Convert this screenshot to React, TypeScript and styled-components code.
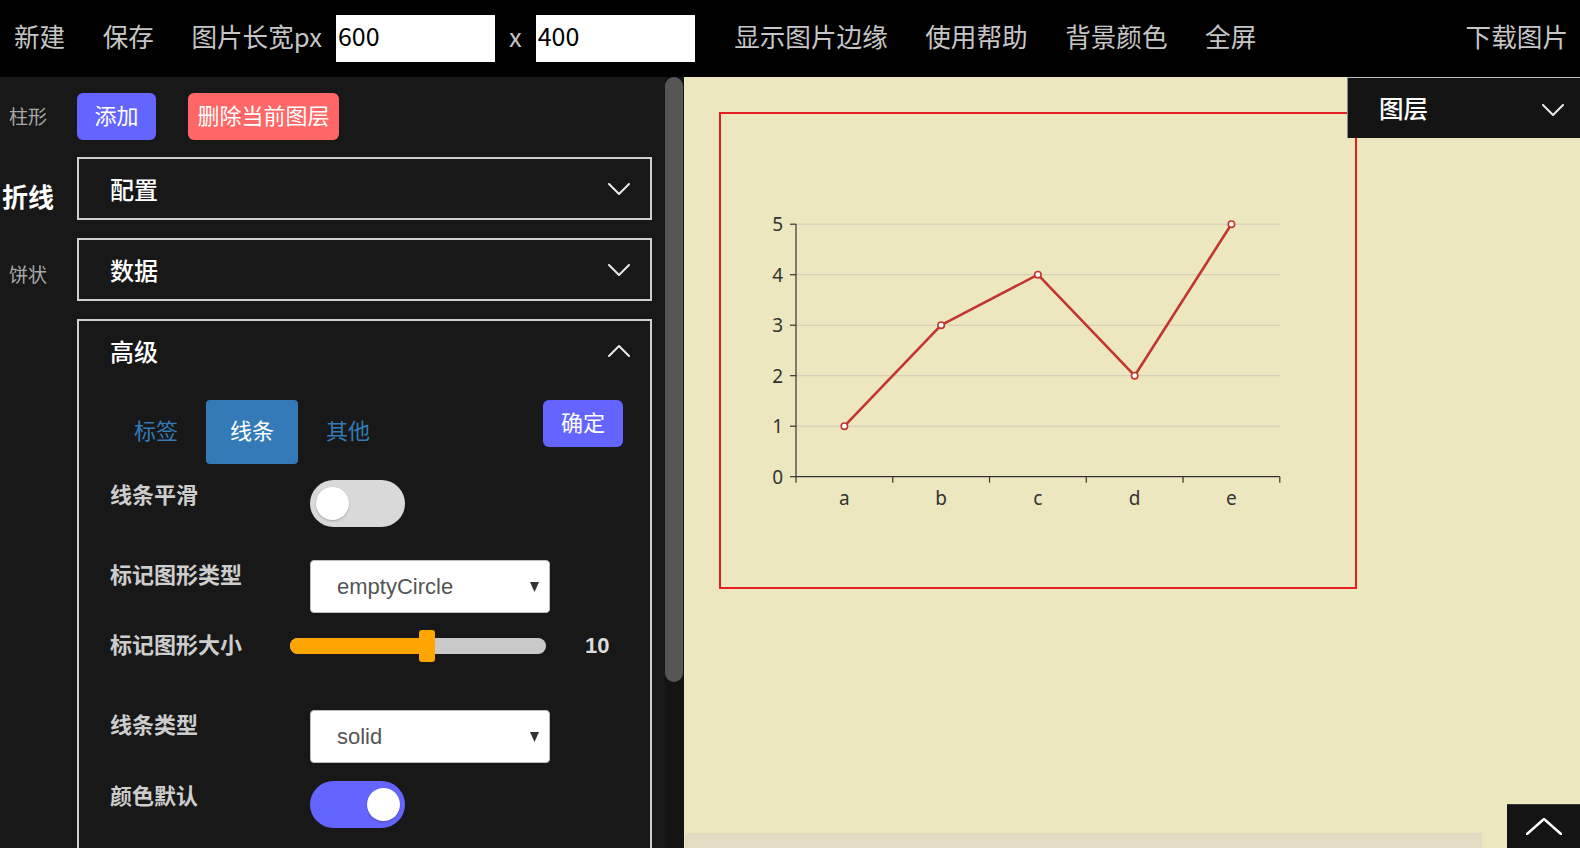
import React from "react";
import styled, { createGlobalStyle } from "styled-components";

const CJK = `"Noto Sans CJK SC", "Noto Sans", sans-serif`;
const LATIN = `"Liberation Sans", Arial, sans-serif`;

const GlobalStyle = createGlobalStyle`
  html, body { margin: 0; padding: 0; height: 100%; overflow: hidden; background: #000; }
  body { font-family: ${CJK}; }
  #root { height: 100%; }
  * { box-sizing: border-box; }
`;

const Page = styled.div`
  display: flex;
  flex-direction: column;
  width: 100vw;
  height: 100vh;
`;

/* ---------- Top bar ---------- */
const TopBar = styled.header`
  height: 77px;
  flex: none;
  background: #000;
  display: flex;
  align-items: center;
  gap: 37.5px;
  padding: 0 12px 0 14px;
`;

const NavItem = styled.span<{ $push?: boolean }>`
  font-size: 25.6px;
  line-height: 1;
  padding-bottom: 6px;
  color: #c6c6c6;
  white-space: nowrap;
  margin-left: ${(p) => (p.$push ? "auto" : "0")};
`;

const SizeGroup = styled.div`
  display: flex;
  align-items: center;
  gap: 14px;
  margin-right: 2px;
`;

const SizeInput = styled.input`
  width: 159px;
  height: 47px;
  margin-top: -1px;
  border: none;
  outline: none;
  background: #fff;
  color: #000;
  font-family: ${CJK};
  font-size: 25px;
  padding: 0 2px 6px;
`;

/* ---------- Main ---------- */
const Main = styled.div`
  flex: 1;
  display: flex;
  min-height: 0;
`;

const Sidebar = styled.aside`
  width: 684px;
  flex: none;
  height: 100%;
  background: #181818;
  display: flex;
  overflow: hidden;
`;

const SidebarInner = styled.div`
  width: 665px;
  flex: none;
  display: flex;
  height: 100%;
  overflow: hidden;
`;

const ScrollRail = styled.div`
  width: 19px;
  flex: none;
  height: 100%;
  background: #141414;
  padding-right: 1px;
`;

const ScrollThumb = styled.div`
  width: 18px;
  height: 605px;
  border-radius: 9px;
  background: #555;
`;

const KindColumn = styled.nav`
  width: 77px;
  flex: none;
  display: flex;
  flex-direction: column;
`;

const KindItem = styled.div<{ $active?: boolean }>`
  width: 56px;
  height: 79px;
  display: flex;
  align-items: center;
  justify-content: center;
  padding-bottom: ${(p) => (p.$active ? "0" : "3px")};
  font-size: ${(p) => (p.$active ? "26px" : "19px")};
  font-weight: ${(p) => (p.$active ? 700 : 400)};
  color: ${(p) => (p.$active ? "#fff" : "#a8a8a8")};
`;

const ContentColumn = styled.div`
  width: 575px;
  flex: none;
  padding-top: 16px;
`;

const ButtonRow = styled.div`
  display: flex;
  gap: 32px;
  margin-bottom: 17px;
`;

const ActionButton = styled.button<{ $bg: string; $w: number }>`
  width: ${(p) => p.$w}px;
  height: 47px;
  border: none;
  border-radius: 6px;
  background: ${(p) => p.$bg};
  color: #fff;
  font-family: ${CJK};
  font-size: 22px;
  line-height: 1;
  padding: 0 0 5px;
  white-space: nowrap;
`;

const Panel = styled.section`
  border: 2px solid #cfcfcf;
  margin-bottom: 18px;
`;

const PanelHeader = styled.div`
  height: 59px;
  display: flex;
  align-items: center;
  justify-content: space-between;
  padding: 0 20px 0 31px;
  font-size: 24px;
  font-weight: 500;
  color: #fff;
`;

const PanelBody = styled.div`
  padding: 0 27px 62px 31px;
`;

const TabsRow = styled.div`
  display: flex;
  align-items: flex-start;
  justify-content: space-between;
  margin-top: 20px;
  margin-bottom: 16px;
`;

const Tabs = styled.div`
  display: flex;
  gap: 4px;
`;

const Tab = styled.div<{ $active?: boolean }>`
  height: 64px;
  padding: 0 24px 7px;
  display: flex;
  align-items: center;
  border-radius: 4px;
  font-size: 22px;
  color: ${(p) => (p.$active ? "#fff" : "#337ab7")};
  background: ${(p) => (p.$active ? "#337ab7" : "transparent")};
`;

const FormRow = styled.div<{ $h?: number }>`
  display: flex;
  align-items: flex-start;
  height: ${(p) => (p.$h ? `${p.$h}px` : "auto")};
`;

const FieldLabel = styled.div<{ $w?: number }>`
  width: ${(p) => p.$w ?? 200}px;
  flex: none;
  padding-top: 2px;
  font-size: 22px;
  line-height: 1;
  font-weight: 700;
  color: #cdcdcd;
  white-space: nowrap;
`;

const Toggle = styled.div<{ $on?: boolean }>`
  width: 95px;
  height: 47px;
  border-radius: 24px;
  background: ${(p) => (p.$on ? "#6464ff" : "#d9d9d9")};
  display: flex;
  align-items: center;
  justify-content: ${(p) => (p.$on ? "flex-end" : "flex-start")};
  padding: 0 5px 0 6px;
`;

const Knob = styled.div`
  width: 33px;
  height: 33px;
  border-radius: 50%;
  background: #fff;
  box-shadow: 0 1px 2px rgba(0, 0, 0, 0.25);
`;

const SelectBox = styled.div`
  width: 240px;
  height: 53px;
  background: #fff;
  border: 1px solid #bdbdbd;
  border-radius: 4px;
  display: flex;
  align-items: center;
  justify-content: space-between;
  padding: 0 10px 0 26px;
  font-family: ${LATIN};
  font-size: 22px;
  color: #555;
`;

const Slider = styled.div`
  position: relative;
  width: 256px;
  height: 32px;
  flex: none;
  display: flex;
  align-items: center;
`;

const SliderTrack = styled.div`
  width: 100%;
  height: 16px;
  border-radius: 8px;
  background: #c9c9c9;
  overflow: hidden;
`;

const SliderFill = styled.div`
  height: 100%;
  background: #ffa500;
`;

const SliderHandle = styled.div`
  position: absolute;
  top: 0;
  width: 16px;
  height: 32px;
  margin-left: -8px;
  border-radius: 3px;
  background: #ffa500;
`;

const SliderValue = styled.div`
  margin-left: 39px;
  line-height: 32px;
  font-family: ${LATIN};
  font-weight: 700;
  font-size: 22px;
  color: #dcdcdc;
`;

/* ---------- Canvas ---------- */
const Canvas = styled.main`
  flex: 1;
  min-width: 0;
  position: relative;
  background: #ede7bf;
  display: flex;
  flex-direction: column;
  overflow: hidden;
`;

const Stage = styled.div`
  flex: 1;
  min-height: 0;
  padding: 35px 0 0 35px;
`;

const HScrollBar = styled.div`
  height: 15px;
  flex: none;
  padding-left: 1px;
`;

const HScrollThumb = styled.div`
  width: 797px;
  height: 100%;
  background: #e2ddc2;
`;

const ImageFrame = styled.div`
  width: 638px;
  height: 477px;
  border: 2px solid #e3201f;
`;

const LayerDropdown = styled.div`
  position: absolute;
  top: 0;
  right: 0;
  width: 233px;
  height: 61px;
  background: #141414;
  border-top: 1px solid #bdbdbd;
  border-left: 1px solid #8a8a8a;
  display: flex;
  align-items: center;
  justify-content: space-between;
  padding: 3px 16px 0 31px;
  font-size: 24.5px;
  font-weight: 500;
  color: #fff;
`;

const LayerTitle = styled.span`
  line-height: 1;
  padding-bottom: 3px;
`;

const BackTop = styled.div`
  position: fixed;
  right: 0;
  bottom: 0;
  width: 73px;
  height: 44px;
  background: #141414;
  border-top: 1px solid #3a3a3a;
  display: flex;
  align-items: center;
  justify-content: center;
`;

/* ---------- Icons ---------- */
const Chevron = ({
  up,
  w = 22,
  h = 12,
  color = "#e8e8e8",
  sw = 2,
}: {
  up?: boolean;
  w?: number;
  h?: number;
  color?: string;
  sw?: number;
}) => (
  <svg width={w} height={h} viewBox={`0 0 ${w} ${h}`}>
    <polyline
      points={
        up
          ? `1,${h - 1} ${w / 2},1 ${w - 1},${h - 1}`
          : `1,1 ${w / 2},${h - 1} ${w - 1},1`
      }
      fill="none"
      stroke={color}
      strokeWidth={sw}
      strokeLinecap="round"
      strokeLinejoin="round"
    />
  </svg>
);

const Caret = () => (
  <svg width="9" height="10" viewBox="0 0 9 10">
    <polygon points="0,0 9,0 4.5,10" fill="#333" />
  </svg>
);

/* ---------- Chart ---------- */
const LineChart = () => {
  const x0 = 75;
  const x1 = 558.8;
  const y0 = 362.7;
  const step = 50.5;
  const band = (x1 - x0) / 5;
  const cats = ["a", "b", "c", "d", "e"];
  const data = [1, 3, 4, 2, 5];
  const px = (i: number) => x0 + band * (i + 0.5);
  const py = (v: number) => y0 - v * step;
  const pts = data.map((v, i) => `${px(i)},${py(v)}`).join(" ");
  return (
    <svg width="634" height="473" viewBox="0 0 634 473">
      {[1, 2, 3, 4, 5].map((v) => (
        <line key={v} x1={x0} x2={x1} y1={py(v)} y2={py(v)} stroke="#cfcbb6" strokeWidth="1" />
      ))}
      <line x1={x0} x2={x0} y1={py(5)} y2={y0} stroke="#333" strokeWidth="1.2" />
      <line x1={x0} x2={x1} y1={y0} y2={y0} stroke="#333" strokeWidth="1.2" />
      {[0, 1, 2, 3, 4, 5].map((v) => (
        <g key={v}>
          <line x1={x0 - 6} x2={x0} y1={py(v)} y2={py(v)} stroke="#333" strokeWidth="1.2" />
          <text
            x={x0 - 13}
            y={py(v)}
            textAnchor="end"
            dominantBaseline="central"
            fontFamily={`"Noto Sans", sans-serif`}
            fontSize="19"
            fill="#333"
          >
            {v}
          </text>
        </g>
      ))}
      {[0, 1, 2, 3, 4, 5].map((i) => (
        <line key={i} x1={x0 + band * i} x2={x0 + band * i} y1={y0} y2={y0 + 6} stroke="#333" strokeWidth="1.2" />
      ))}
      {cats.map((c, i) => (
        <text
          key={c}
          x={px(i)}
          y={391}
          textAnchor="middle"
          fontFamily={`"Noto Sans", sans-serif`}
          fontSize="19"
          fill="#333"
        >
          {c}
        </text>
      ))}
      <polyline points={pts} fill="none" stroke="#c23531" strokeWidth="2.6" strokeLinejoin="round" />
      {data.map((v, i) => (
        <circle key={i} cx={px(i)} cy={py(v)} r="3.2" fill="#fff" stroke="#c23531" strokeWidth="1.6" />
      ))}
    </svg>
  );
};

export default function App() {
  return (
    <Page>
      <GlobalStyle />
      <TopBar>
        <NavItem>新建</NavItem>
        <NavItem>保存</NavItem>
        <SizeGroup>
          <NavItem>图片长宽px</NavItem>
          <SizeInput defaultValue="600" />
          <NavItem>x</NavItem>
          <SizeInput defaultValue="400" />
        </SizeGroup>
        <NavItem>显示图片边缘</NavItem>
        <NavItem>使用帮助</NavItem>
        <NavItem>背景颜色</NavItem>
        <NavItem>全屏</NavItem>
        <NavItem $push>下载图片</NavItem>
      </TopBar>
      <Main>
        <Sidebar>
          <SidebarInner>
            <KindColumn>
              <KindItem>柱形</KindItem>
              <KindItem $active>折线</KindItem>
              <KindItem>饼状</KindItem>
            </KindColumn>
            <ContentColumn>
              <ButtonRow>
                <ActionButton $bg="#6464ff" $w={79}>添加</ActionButton>
                <ActionButton $bg="#ff6666" $w={151}>删除当前图层</ActionButton>
              </ButtonRow>
              <Panel>
                <PanelHeader>
                  <span>配置</span>
                  <Chevron />
                </PanelHeader>
              </Panel>
              <Panel>
                <PanelHeader>
                  <span>数据</span>
                  <Chevron />
                </PanelHeader>
              </Panel>
              <Panel>
                <PanelHeader>
                  <span>高级</span>
                  <Chevron up />
                </PanelHeader>
                <PanelBody>
                  <TabsRow>
                    <Tabs>
                      <Tab>标签</Tab>
                      <Tab $active>线条</Tab>
                      <Tab>其他</Tab>
                    </Tabs>
                    <ActionButton $bg="#6464ff" $w={80}>确定</ActionButton>
                  </TabsRow>
                  <FormRow $h={80}>
                    <FieldLabel>线条平滑</FieldLabel>
                    <Toggle>
                      <Knob />
                    </Toggle>
                  </FormRow>
                  <FormRow $h={70}>
                    <FieldLabel>标记图形类型</FieldLabel>
                    <SelectBox>
                      <span>emptyCircle</span>
                      <Caret />
                    </SelectBox>
                  </FormRow>
                  <FormRow $h={80}>
                    <FieldLabel $w={180}>标记图形大小</FieldLabel>
                    <Slider>
                      <SliderTrack>
                        <SliderFill style={{ width: "53.5%" }} />
                      </SliderTrack>
                      <SliderHandle style={{ left: "53.5%" }} />
                    </Slider>
                    <SliderValue>10</SliderValue>
                  </FormRow>
                  <FormRow $h={71}>
                    <FieldLabel>线条类型</FieldLabel>
                    <SelectBox>
                      <span>solid</span>
                      <Caret />
                    </SelectBox>
                  </FormRow>
                  <FormRow>
                    <FieldLabel>颜色默认</FieldLabel>
                    <Toggle $on>
                      <Knob />
                    </Toggle>
                  </FormRow>
                </PanelBody>
              </Panel>
            </ContentColumn>
          </SidebarInner>
          <ScrollRail>
            <ScrollThumb />
          </ScrollRail>
        </Sidebar>
        <Canvas>
          <Stage>
            <ImageFrame>
              <LineChart />
            </ImageFrame>
          </Stage>
          <HScrollBar>
            <HScrollThumb />
          </HScrollBar>
          <LayerDropdown>
            <LayerTitle>图层</LayerTitle>
            <Chevron />
          </LayerDropdown>
        </Canvas>
      </Main>
      <BackTop>
        <Chevron up w={36} h={17} color="#fff" sw={2.4} />
      </BackTop>
    </Page>
  );
}
